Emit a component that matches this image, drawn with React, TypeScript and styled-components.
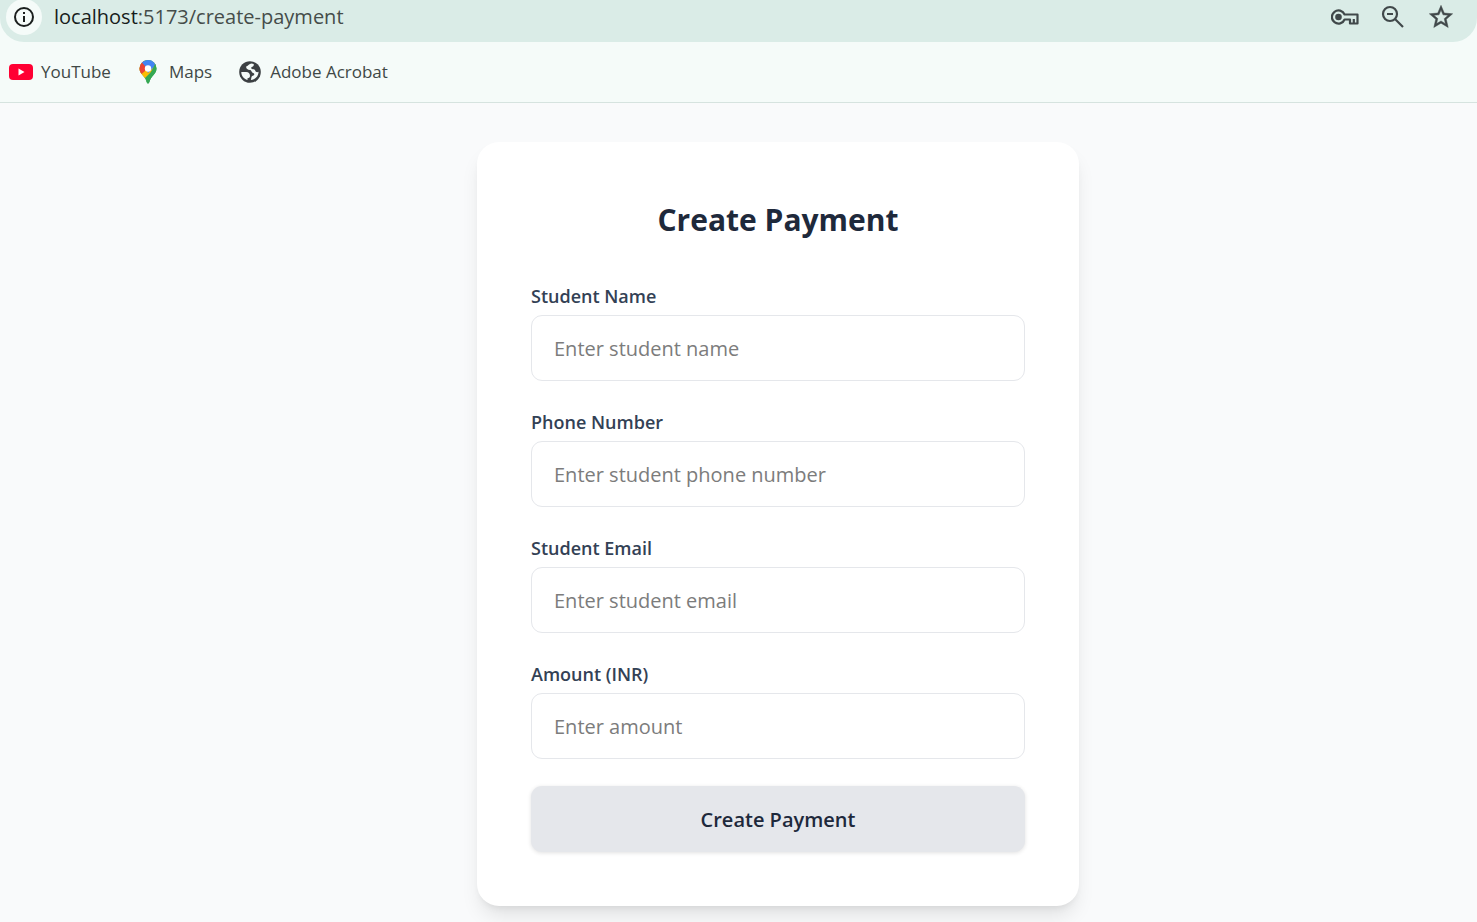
import React from "react";
import styled, { createGlobalStyle } from "styled-components";

const GlobalStyle = createGlobalStyle`
  *, *::before, *::after { box-sizing: border-box; }
  html, body, #root { min-height: 100vh; }
  body {
    margin: 0;
    background: #f9fafb;
    font-family: "Open Sans", "Noto Sans", sans-serif;
  }
`;

const Page = styled.div`
  display: flex;
  flex-direction: column;
  min-height: 100vh;
`;

const BrowserChrome = styled.header`
  background: #f5fbf9;
  border-bottom: 1px solid #d6e3df;
`;

const AddressBar = styled.div`
  display: flex;
  align-items: center;
  height: 42px;
  padding: 0 22px 8px 6px;
  background: #daece7;
  border-radius: 0 0 24px 24px;
`;

const IconButton = styled.button`
  display: flex;
  align-items: center;
  justify-content: center;
  padding: 0;
  border: 0;
  background: none;
  color: #40484a;
`;

const SiteInfoButton = styled(IconButton)`
  flex: none;
  width: 36px;
  height: 36px;
  border-radius: 50%;
  background: #f5fbf9;
  color: #1b1f1e;
`;

const Url = styled.div`
  flex: 1;
  margin-left: 12px;
  font-size: 20px;
  line-height: 28px;
  color: #454c4a;
`;

const UrlHost = styled.span`
  color: #171d1b;
`;

const BarActions = styled.div`
  display: flex;
  align-items: center;
  gap: 20px;
`;

const Bookmarks = styled.nav`
  display: flex;
  align-items: center;
  gap: 26px;
  height: 60px;
  padding: 0 8px;
`;

const Bookmark = styled.a`
  display: flex;
  align-items: center;
  gap: 8px;
  font-size: 17px;
  line-height: 24px;
  color: #404846;
  text-decoration: none;
`;

const Main = styled.main`
  flex: 1;
  display: flex;
  justify-content: center;
  align-items: flex-start;
  padding: 39px 0 16px 79px;
`;

const Card = styled.form`
  display: flex;
  flex-direction: column;
  gap: 27px;
  width: 100%;
  max-width: 602px;
  padding: 54px;
  background: #fff;
  border-radius: 22px;
  box-shadow: 0 13px 20px -4px rgba(0, 0, 0, 0.1), 0 5px 8px -5px rgba(0, 0, 0, 0.1);
`;

const Title = styled.h1`
  margin: 0 0 11px;
  font-size: 30px;
  font-weight: 700;
  line-height: 48px;
  text-align: center;
  color: #1e293b;
`;

const Field = styled.div`
  display: flex;
  flex-direction: column;
  gap: 5px;
`;

const Label = styled.label`
  font-size: 18px;
  font-weight: 600;
  line-height: 28px;
  color: #334155;
`;

const TextInput = styled.input`
  width: 100%;
  height: 66px;
  padding: 1px 22px 0;
  border: 1px solid #e5e7eb;
  border-radius: 11px;
  background: #fff;
  font-family: inherit;
  font-size: 20px;
  color: #1e293b;
  outline: none;

  &::placeholder {
    color: #7c7c7c;
    opacity: 1;
  }
`;

const SubmitButton = styled.button`
  height: 66px;
  border: 0;
  border-radius: 11px;
  background: #e5e7eb;
  box-shadow: 0 1px 4px rgba(0, 0, 0, 0.12);
  font-family: inherit;
  font-size: 20px;
  font-weight: 600;
  color: #1e293b;
`;

const InfoIcon = () => (
  <svg width="20" height="20" viewBox="0 0 20 20" fill="none" stroke="currentColor" strokeWidth="2">
    <circle cx="10" cy="10" r="9" />
    <path d="M10 9v6M10 5v2" />
  </svg>
);

const KeyIcon = () => (
  <svg width="28" height="18" viewBox="0 0 28 18" fill="none" stroke="currentColor" strokeWidth="2.2">
    <path d="M13.6 6.5A6.6 6.6 0 1 0 13.6 11.5H19V15.5H26.5V6.5Z" strokeLinejoin="round" />
    <path d="M22.8 11v4" />
    <circle cx="7.5" cy="9" r="3.3" fill="currentColor" stroke="none" />
  </svg>
);

const ZoomOutIcon = () => (
  <svg width="28" height="28" viewBox="0 0 28 28" fill="none" stroke="currentColor" strokeWidth="2.2">
    <circle cx="11" cy="11" r="7" />
    <path d="M8 11h6M16 16l8 8" />
  </svg>
);

const StarIcon = () => (
  <svg width="28" height="28" viewBox="0 0 24 24" fill="currentColor" stroke="currentColor" strokeWidth="0.4">
    <path d="M22 9.24l-7.19-.62L12 2 9.19 8.63 2 9.24l5.46 4.73L5.82 21 12 17.27 18.18 21l-1.63-7.03L22 9.24zM12 15.4l-3.76 2.27 1-4.28-3.32-2.88 4.38-.38L12 6.1l1.71 4.04 4.38.38-3.32 2.88 1 4.28L12 15.4z" />
  </svg>
);

const YouTubeIcon = () => (
  <svg width="25" height="18" viewBox="0 0 25 18">
    <rect x="1" y="1" width="24" height="16" rx="4" fill="#ff0033" />
    <path d="M10.5 5.5v7l6-3.5z" fill="#fff" />
  </svg>
);

const MapsIcon = () => (
  <svg width="24" height="24" viewBox="0 0 24 24">
    <clipPath id="pin">
      <path d="M11 0a8.5 8.5 0 0 0-8.5 8.5c0 6 6 7.5 7.3 14.2q1.2 2.2 2.4 0C13.5 16 19.5 14.5 19.5 8.5A8.5 8.5 0 0 0 11 0z" />
    </clipPath>
    <g clipPath="url(#pin)">
      <path d="M0 0h22v24H0z" fill="#34a853" />
      <path d="M0 16V8l5-5 6 5.5L17.500 2 20 6 5 21z" fill="#fbbc04" />
      <path d="M0 0h6l5 8.5L4.500 14 0 12z" fill="#ea4335" />
      <path d="M4.500 2 9 0h9l1 5-8 8-3-7z" fill="#4285f4" />
      <path d="M18.300 3.500 24 6v16H9z" fill="#34a853" />
      <circle cx="11" cy="8.500" r="3.200" fill="#fff" />
    </g>
  </svg>
);

const GlobeIcon = () => (
  <svg width="24" height="24" viewBox="0 0 24 24">
    <circle cx="12" cy="12" r="10.8" fill="#3c4043" />
    <path d="M13.5 3.4C11 3.500 10.500 5.500 8.200 6.500 7.800 8.500 9.500 10 12 10c1.500 0 1.300 2.500 3.200 3 1.800.5 1.200 2.500-.5 2.800-1.500.3-1.200 2.200-1.800 4.300 4.500-.5 7.600-4 7.700-8.300-1.500.8-3 .2-3.400-1.200-.4-1.300-2-1.300-3.200-1.500-1.300-.4-1-2 .3-2.300 1.200-.3 1.700-1.300 1.400-2.900z" fill="#f5fbf9" />
    <path d="M3.3 12c0 3.8 2.500 7 6.200 8v-1.800c1.800 0 2.500-1 2.500-2.400 0-2.300-1.500-3.800-3.800-3.800z" fill="#f5fbf9" />
  </svg>
);

const bookmarks = [
  { name: "YouTube", icon: <YouTubeIcon /> },
  { name: "Maps", icon: <MapsIcon /> },
  { name: "Adobe Acrobat", icon: <GlobeIcon /> },
];

const fields = [
  { id: "name", label: "Student Name", placeholder: "Enter student name", type: "text" },
  { id: "phone", label: "Phone Number", placeholder: "Enter student phone number", type: "tel" },
  { id: "email", label: "Student Email", placeholder: "Enter student email", type: "email" },
  { id: "amount", label: "Amount (INR)", placeholder: "Enter amount", type: "number" },
];

export default function App() {
  return (
    <Page>
      <GlobalStyle />
      <BrowserChrome>
        <AddressBar>
          <SiteInfoButton aria-label="Site information"><InfoIcon /></SiteInfoButton>
          <Url><UrlHost>localhost</UrlHost>:5173/create-payment</Url>
          <BarActions>
            <IconButton aria-label="Passwords"><KeyIcon /></IconButton>
            <IconButton aria-label="Zoom"><ZoomOutIcon /></IconButton>
            <IconButton aria-label="Bookmark this page"><StarIcon /></IconButton>
          </BarActions>
        </AddressBar>
        <Bookmarks>
          {bookmarks.map((b) => (
            <Bookmark key={b.name} href="#">{b.icon}{b.name}</Bookmark>
          ))}
        </Bookmarks>
      </BrowserChrome>
      <Main>
        <Card onSubmit={(e) => e.preventDefault()}>
          <Title>Create Payment</Title>
          {fields.map((f) => (
            <Field key={f.id}>
              <Label htmlFor={f.id}>{f.label}</Label>
              <TextInput id={f.id} type={f.type} placeholder={f.placeholder} />
            </Field>
          ))}
          <SubmitButton type="submit">Create Payment</SubmitButton>
        </Card>
      </Main>
    </Page>
  );
}
